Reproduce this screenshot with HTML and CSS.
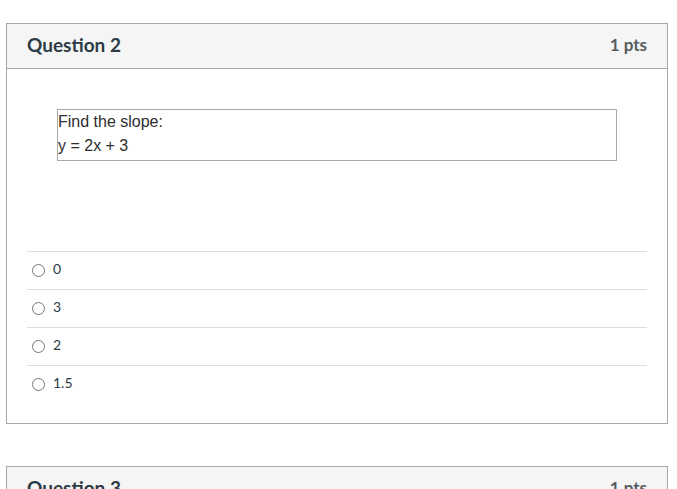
FILE: index.html
```html
<!DOCTYPE html>
<html>
<head>
<meta charset="utf-8">
<link rel="stylesheet" href="styles.css">
</head>
<body>
<div class="page">
  <div class="card">
    <div class="card-header">
      <span class="q-title">Question 2</span>
      <span class="q-pts">1 pts</span>
    </div>
    <div class="card-body">
      <div class="prompt">
        <div class="line">Find the slope:</div>
        <div class="line">y = 2x + 3</div>
      </div>
      <div class="answers">
        <label class="answer"><span class="radio"></span><span class="ans-text">0</span></label>
        <label class="answer"><span class="radio"></span><span class="ans-text">3</span></label>
        <label class="answer"><span class="radio"></span><span class="ans-text">2</span></label>
        <label class="answer"><span class="radio"></span><span class="ans-text">1.5</span></label>
      </div>
    </div>
  </div>
  <div class="card">
    <div class="card-header">
      <span class="q-title">Question 3</span>
      <span class="q-pts">1 pts</span>
    </div>
    <div class="card-body tall"></div>
  </div>
</div>
</body>
</html>
```
FILE: styles.css
```css
html, body {
  margin: 0;
  padding: 0;
  background: #fff;
  overflow: hidden;
}
.page {
  padding: 23px 9px 0 6px;
  display: flex;
  flex-direction: column;
  gap: 42px;
  font-family: Lato, "Liberation Sans", sans-serif;
  color: #2d3b45;
}
.card {
  border: 1px solid #a8a8a8;
}
.card-header {
  box-sizing: border-box;
  height: 45px;
  padding: 0 20px 3px 20px;
  background: #f5f5f5;
  border-bottom: 1px solid #a8a8a8;
  display: flex;
  align-items: center;
  justify-content: space-between;
}
.q-title {
  font-size: 19px;
  font-weight: 700;
  color: #2d3b45;
}
.q-pts {
  font-size: 17px;
  font-weight: 700;
  color: #555b5f;
}
.card-body {
  padding: 40px 20px 20px 20px;
}
.card-body.tall {
  height: 300px;
}
.prompt {
  margin: 0 30px;
  border: 1px solid #a8a8a8;
  padding: 0 0 3px 0;
  font-family: "Liberation Sans", Arial, sans-serif;
  font-size: 16px;
  line-height: 23px;
  color: #2d2d2d;
}
.line + .line {
  margin-top: 1px;
}
.answers {
  margin-top: 90px;
  display: flex;
  flex-direction: column;
}
.answer {
  display: flex;
  align-items: center;
  height: 37px;
  border-top: 1px solid #dddddd;
  padding-left: 5px;
  font-size: 14px;
  color: #2d3b45;
}
.ans-text {
  margin-bottom: 5px;
}
.radio {
  width: 11px;
  height: 11px;
  border: 1px solid #767676;
  border-radius: 50%;
  margin-right: 8px;
}
```
